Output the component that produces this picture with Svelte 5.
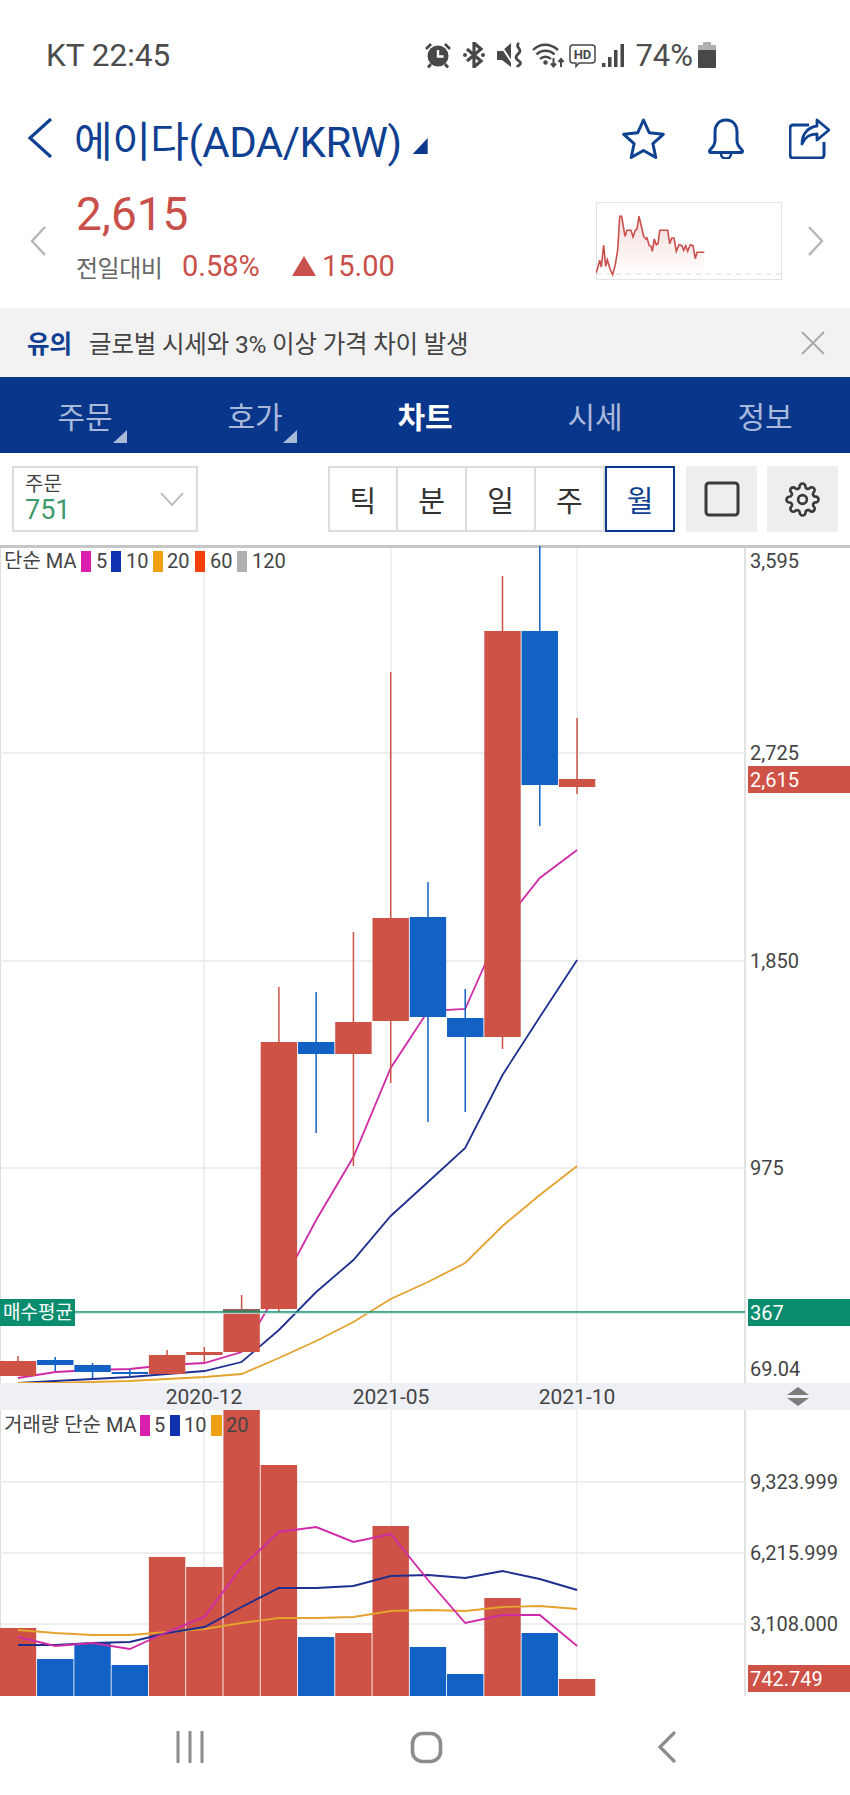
<script>
    const RED = '#cf5247';
    const BLUE = '#1261c4';
    const PINK = '#d02ba6';
    const NAVY = '#1e2f8f';
    const ORANGE = '#e3a32e';

    const cx = (i) => 18 + i * 37.27;

    // body top, body bottom, wick top, wick bottom, colour
    const candles = [
        [1361, 1376, 1356, 1376, RED],
        [1360, 1365, 1357, 1371, BLUE],
        [1365, 1372, 1363, 1378, BLUE],
        [1372, 1374, 1369, 1376, BLUE],
        [1355, 1374, 1350, 1374, RED],
        [1352, 1355, 1347, 1362, RED],
        [1309, 1352, 1295, 1352, RED],
        [1042, 1309, 987, 1312, RED],
        [1042, 1054, 992, 1133, BLUE],
        [1022, 1054, 932, 1166, RED],
        [918, 1021, 672, 1083, RED],
        [917, 1017, 882, 1122, BLUE],
        [1018, 1037, 989, 1112, BLUE],
        [631, 1037, 576, 1049, RED],
        [631, 785, 546, 826, BLUE],
        [779, 787, 718, 794, RED]
    ];

    const priceLines = [
        { color: PINK, ys: [1378, 1372, 1370, 1369, 1365, 1363, 1352, 1290, 1220, 1157, 1068, 1011, 1009, 925, 878, 850] },
        { color: NAVY, ys: [1383, 1381, 1379, 1377, 1374, 1371, 1362, 1330, 1292, 1260, 1216, 1182, 1148, 1075, 1017, 960] },
        { color: ORANGE, ys: [1383, 1383, 1382, 1381, 1379, 1377, 1374, 1358, 1341, 1322, 1299, 1282, 1263, 1226, 1195, 1166] }
    ];

    const volumes = [
        [1628, RED], [1659, BLUE], [1643, BLUE], [1665, BLUE],
        [1557, RED], [1567, RED], [1410, RED], [1465, RED],
        [1637, BLUE], [1633, RED], [1526, RED], [1647, BLUE],
        [1674, BLUE], [1598, RED], [1633, BLUE], [1679, RED]
    ];

    const volumeLines = [
        { color: ORANGE, ys: [1630, 1633, 1635, 1635, 1632, 1629, 1623, 1618, 1618, 1617, 1611, 1610, 1611, 1607, 1606, 1609] },
        { color: NAVY, ys: [1645, 1645, 1643, 1642, 1633, 1627, 1607, 1588, 1588, 1586, 1576, 1575, 1578, 1571, 1579, 1590] },
        { color: PINK, ys: [1637, 1646, 1643, 1649, 1632, 1617, 1567, 1532, 1527, 1542, 1534, 1580, 1623, 1615, 1615, 1646] }
    ];

    const toPoints = (ys) => ys.map((y, i) => `${cx(i).toFixed(1)},${y}`).join(' ');

    const grid = [204, 391, 577];
    const priceAxis = [
        ['3,595', 561], ['2,725', 753], ['1,850', 961], ['975', 1168], ['69.04', 1369]
    ];
    const volumeAxis = [
        ['9,323.999', 1482], ['6,215.999', 1553], ['3,108.000', 1624]
    ];
    const dates = [['2020-12', 204], ['2021-05', 391], ['2021-10', 577]];

    const tabs = [
        { label: '주문', mark: true },
        { label: '호가', mark: true },
        { label: '차트', active: true },
        { label: '시세' },
        { label: '정보' }
    ];
    const periods = ['틱', '분', '일', '주', '월'];

    const miniRaw = [
        [47,250],[52,235],[58,212],[63,232],[70,167],[76,230],[81,210],[90,240],[97,255],[105,225],
        [112,180],[118,80],[124,80],[134,140],[140,122],[152,122],[158,142],[165,122],[170,118],[176,80],
        [190,140],[197,148],[200,145],[207,168],[212,170],[216,185],[222,148],[228,165],[233,162],[238,122],
        [262,122],[268,162],[274,145],[281,145],[288,185],[296,165],[305,168],[310,182],[316,168],[322,185],
        [330,165],[338,168],[345,207],[350,188],[372,188]
    ];
    const mini = miniRaw.map(([x, y]) => `${((x - 47) / 3).toFixed(1)},${((y - 37) / 3).toFixed(1)}`).join(' ');
    const miniArea = `0,72 ${mini} 108,72`;
</script>

<main class="phone">
    <div class="status">
        <span class="carrier">KT 22:45</span>
        <div class="status-icons">
            <svg class="ic-alarm" width="26" height="26" viewBox="0 0 26 26">
                <circle cx="13" cy="14" r="10.500" fill="#484848" />
                <path d="M13 8v6.500h5.500" fill="none" stroke="#fff" stroke-width="2.400" />
                <path d="M1 7l5-5M25 7l-5-5M6 22l-3 3.500M20 22l3 3.500" stroke="#484848" stroke-width="2.800" fill="none" />
            </svg>
            <svg class="ic-bt" width="22" height="26" viewBox="0 0 22 26">
                <path d="M4 7l14 12-7 6V1l7 6L4 19" fill="none" stroke="#484848" stroke-width="3.200" />
                <circle cx="2" cy="13" r="2" fill="#484848" />
                <circle cx="20" cy="13" r="2" fill="#484848" />
            </svg>
            <svg class="ic-mute" width="25" height="26" viewBox="0 0 25 26">
                <path d="M0 9h5l9-8v24l-9-7H0z" fill="#484848" />
                <path d="M2 1l14 21" stroke="#fff" stroke-width="2" />
                <path d="M22 1c-5 4 4 6 0 10s-4 5 0 8-1 4-2 6" fill="none" stroke="#484848" stroke-width="2.800" />
            </svg>
            <svg class="ic-wifi" width="33" height="26" viewBox="0 0 33 26">
                <path d="M1 8c7-7 17-7 25 0M4.500 12.500c5-5 13-5 18 0M8 17c3-3 8-3 11 0" fill="none" stroke="#484848" stroke-width="2.400" />
                <circle cx="13.500" cy="20.500" r="2.200" fill="#484848" />
                <path d="M21.500 16v8M19 21.500l2.500 3 2.500-3M29 25v-8M26.500 20l2.500-3 2.500 3" fill="none" stroke="#484848" stroke-width="2" />
            </svg>
            <svg class="ic-hd" width="27" height="26" viewBox="0 0 27 26">
                <path d="M4 3h19a3 3 0 0 1 3 3v12a3 3 0 0 1-3 3H10l-3 3.500V21H4a3 3 0 0 1-3-3V6a3 3 0 0 1 3-3z" fill="none" stroke="#484848" stroke-width="1.500" />
                <text x="13.500" y="17" text-anchor="middle" class="hd-text">HD</text>
            </svg>
            <svg class="ic-signal" width="22" height="26" viewBox="0 0 22 26">
                <rect x="0" y="21" width="3.500" height="4" fill="#484848" />
                <rect x="6" y="15" width="3.500" height="10" fill="#484848" />
                <rect x="12" y="8" width="3.500" height="17" fill="#484848" />
                <rect x="18.500" y="2" width="3.500" height="23" fill="#484848" />
            </svg>
            <span class="batt-text">74%</span>
            <svg class="ic-batt" width="18" height="26" viewBox="0 0 18 26">
                <path d="M5 0h8v3h5v6H0V3h5z" fill="#b0b0b0" />
                <rect x="0" y="8" width="18" height="18" rx="1" fill="#484848" />
            </svg>
        </div>
    </div>

    <header class="title-row">
        <svg class="back" width="26" height="40" viewBox="0 0 26 40">
            <path d="M24 1 3 20l21 19" fill="none" stroke="#0f4191" stroke-width="3.200" />
        </svg>
        <h1>에이다(ADA/KRW)</h1>
        <span class="title-mark"></span>
        <div class="actions">
            <svg width="43" height="41" viewBox="0 0 43 41">
                <path d="M21.500 2l5.800 12.800 14 1.500-10.400 9.400 2.900 13.800-12.300-7-12.300 7 2.900-13.800L1.700 16.300l14-1.500z" fill="none" stroke="#0f4191" stroke-width="3" stroke-linejoin="round" />
            </svg>
            <svg width="38" height="41" viewBox="0 0 38 41">
                <path d="M19 2c-7 0-11 5-11 12v9c0 4-2 6-5 9-1 1-.5 2.500 1 2.500h30c1.500 0 2-1.500 1-2.500-3-3-5-5-5-9v-9c0-7-4-12-11-12z" fill="none" stroke="#0f4191" stroke-width="3" />
                <path d="M14 36c0 6 10 6 10 0" fill="none" stroke="#0f4191" stroke-width="2.600" />
            </svg>
            <svg width="41" height="41" viewBox="0 0 41 41">
                <path d="M20 7H4a3 3 0 0 0-3 3v27a3 3 0 0 0 3 3h28a3 3 0 0 0 3-3V24" fill="none" stroke="#0f4191" stroke-width="3" />
                <path d="M28 2l12 10-12 10v-6c-8 0-12 3-15 10 0-10 6-17 15-18z" fill="none" stroke="#0f4191" stroke-width="2.800" stroke-linejoin="round" />
            </svg>
        </div>
    </header>

    <section class="price-row">
        <svg class="side-arrow" width="16" height="30" viewBox="0 0 16 30">
            <path d="M15 1 2 15l13 14" fill="none" stroke="#b5b5b5" stroke-width="2.400" />
        </svg>
        <div class="price-col">
            <div class="price">2,615</div>
            <div class="change">
                <span class="change-label">전일대비</span>
                <span class="change-pct">0.58%</span>
                <span class="change-arrow"></span>
                <span class="change-val">15.00</span>
            </div>
        </div>
        <div class="mini-chart">
            <svg width="186" height="78" viewBox="0 0 186 78">
                <defs>
                    <linearGradient id="miniFill" x1="0" y1="0" x2="0" y2="1">
                        <stop offset="0" stop-color="#cf5247" stop-opacity="0.2" />
                        <stop offset="1" stop-color="#cf5247" stop-opacity="0.01" />
                    </linearGradient>
                </defs>
                <polygon points={miniArea} fill="url(#miniFill)" />
                <line x1="0" x2="186" y1="72" y2="72" stroke="#d8d8d8" stroke-width="1" stroke-dasharray="5 5" />
                <polyline points={mini} fill="none" stroke="#c9504c" stroke-width="1.600" />
            </svg>
        </div>
        <svg class="side-arrow right" width="16" height="30" viewBox="0 0 16 30">
            <path d="M1 1l13 14L1 29" fill="none" stroke="#b5b5b5" stroke-width="2.400" />
        </svg>
    </section>

    <section class="notice">
        <strong>유의</strong>
        <span>글로벌 시세와 3% 이상 가격 차이 발생</span>
        <svg class="close" width="24" height="24" viewBox="0 0 24 24">
            <path d="M1 1l22 22M23 1 1 23" stroke="#a8a8a8" stroke-width="1.800" fill="none" />
        </svg>
    </section>

    <nav class="tabs">
        {#each tabs as tab}
            <div class="tab" class:active={tab.active}>
                {tab.label}
                {#if tab.mark}<span class="tab-mark"></span>{/if}
            </div>
        {/each}
    </nav>

    <section class="toolbar">
        <div class="select">
            <div class="select-text">
                <span class="select-label">주문</span>
                <span class="select-value">751</span>
            </div>
            <svg width="24" height="14" viewBox="0 0 24 14">
                <path d="M1 1l11 12L23 1" fill="none" stroke="#b0b0b0" stroke-width="1.600" />
            </svg>
        </div>
        <div class="periods">
            {#each periods as p, i}
                <div class="period" class:on={i === 4}>{p}</div>
            {/each}
        </div>
        <button class="tool" aria-label="layout">
            <svg width="36" height="36" viewBox="0 0 36 36">
                <rect x="2" y="2" width="32" height="32" rx="3" fill="none" stroke="#3a3a3a" stroke-width="3" />
            </svg>
        </button>
        <button class="tool" aria-label="settings">
            <svg width="35" height="35" viewBox="0 0 24 24" fill="none" stroke="#3a3a3a" stroke-width="1.800">
                <circle cx="12" cy="12" r="3" />
                <path d="M19.4 15a1.65 1.65 0 0 0 .33 1.82l.06.06a2 2 0 0 1 0 2.83 2 2 0 0 1-2.83 0l-.06-.06a1.65 1.65 0 0 0-1.82-.33 1.65 1.65 0 0 0-1 1.51V21a2 2 0 0 1-2 2 2 2 0 0 1-2-2v-.09A1.65 1.65 0 0 0 9 19.4a1.65 1.65 0 0 0-1.82.33l-.06.06a2 2 0 0 1-2.83 0 2 2 0 0 1 0-2.83l.06-.06a1.65 1.65 0 0 0 .33-1.82 1.65 1.65 0 0 0-1.51-1H3a2 2 0 0 1-2-2 2 2 0 0 1 2-2h.09A1.65 1.65 0 0 0 4.6 9a1.65 1.65 0 0 0-.33-1.82l-.06-.06a2 2 0 0 1 0-2.83 2 2 0 0 1 2.83 0l.06.06a1.65 1.65 0 0 0 1.82.33H9a1.65 1.65 0 0 0 1-1.51V3a2 2 0 0 1 2-2 2 2 0 0 1 2 2v.09a1.65 1.65 0 0 0 1 1.51 1.65 1.65 0 0 0 1.82-.33l.06-.06a2 2 0 0 1 2.83 0 2 2 0 0 1 0 2.83l-.06.06a1.65 1.65 0 0 0-.33 1.82V9a1.65 1.65 0 0 0 1.51 1H21a2 2 0 0 1 2 2 2 2 0 0 1-2 2h-.09a1.65 1.65 0 0 0-1.51 1z" />
            </svg>
        </button>
    </section>

    <!-- the chart itself is a free canvas, y values are page pixels -->
    <svg class="chart" width="850" height="838" viewBox="0 545 850 838">
        <rect x="0" y="545" width="850" height="3" fill="#c6c6c6" />
        <line x1="0.5" x2="0.5" y1="548" y2="1383" stroke="#dcdcdc" />
        <line x1="745" x2="745" y1="548" y2="1383" stroke="#d8d8d8" stroke-width="1.500" />
        {#each grid as x}
            <line x1={x} x2={x} y1="548" y2="1383" stroke="#e2e2e2" />
        {/each}
        {#each priceAxis.slice(1, 4) as [, y]}
            <line x1="0" x2="745" y1={y} y2={y} stroke="#e8e8e8" stroke-width="1.500" />
        {/each}

        {#each priceLines as l}
            <polyline points={toPoints(l.ys)} fill="none" stroke={l.color} stroke-width="1.800" />
        {/each}

        {#each candles as c, i}
            <line x1={cx(i)} x2={cx(i)} y1={c[2]} y2={c[3]} stroke={c[4]} stroke-width="1.500" />
            <rect x={cx(i) - 18.200} y={c[0]} width="36.400" height={c[1] - c[0]} fill={c[4]} />
        {/each}

        <rect x="223" y="1309" width="37" height="3" fill="#7d6a58" />
        <line x1="0" x2="745" y1="1312" y2="1312" stroke="#0b8d6f" stroke-width="1.500" />
        <line x1="0" x2="745" y1="1313.300" y2="1313.300" stroke="#bfe5da" stroke-width="1" />

        <rect x="0" y="1299" width="75" height="27" fill="#0a8d6e" />
        <text x="3" y="1312.500" class="axis cjk white" textLength="70">매수평균</text>

        <rect x="748" y="766" width="102" height="27" fill={RED} />
        <rect x="748" y="1299" width="102" height="27" fill="#0a8d6e" />
        {#each priceAxis as [label, y]}
            <text x="750" y={y} class="axis">{label}</text>
        {/each}
        <text x="750" y="780" class="axis white">2,615</text>
        <text x="750" y="1312.500" class="axis white">367</text>

        <text x="4" y="561" class="axis cjk legend">단순 MA</text>
        <rect x="81" y="551" width="10" height="21" fill="#d91fae" />
        <text x="96" y="561" class="axis legend">5</text>
        <rect x="111" y="551" width="10" height="21" fill="#1030b0" />
        <text x="126" y="561" class="axis legend">10</text>
        <rect x="153" y="551" width="10" height="21" fill="#ee9f12" />
        <text x="167" y="561" class="axis legend">20</text>
        <rect x="195" y="551" width="10" height="21" fill="#f4410c" />
        <text x="210" y="561" class="axis legend">60</text>
        <rect x="237" y="551" width="10" height="21" fill="#b0b0b0" />
        <text x="252" y="561" class="axis legend">120</text>
    </svg>

    <div class="datebar">
        <svg width="850" height="27" viewBox="0 1383 850 27">
            {#each dates as [label, x]}
                <text x={x} y="1397" text-anchor="middle" class="axis date">{label}</text>
            {/each}
            <path d="M787 1395l11-8 11 8zM787 1398l11 8 11-8z" fill="#7c7c7c" />
        </svg>
    </div>

    <svg class="chart" width="850" height="287" viewBox="0 1410 850 287">
        <line x1="0.5" x2="0.5" y1="1410" y2="1696" stroke="#dcdcdc" />
        <line x1="745" x2="745" y1="1410" y2="1696" stroke="#d8d8d8" stroke-width="1.500" />
        {#each grid as x}
            <line x1={x} x2={x} y1="1410" y2="1696" stroke="#e2e2e2" />
        {/each}
        {#each volumeAxis as [, y]}
            <line x1="0" x2="745" y1={y} y2={y} stroke="#e8e8e8" stroke-width="1.500" />
        {/each}

        {#each volumes as v, i}
            <rect x={cx(i) - 18.200} y={v[0]} width="36.400" height={1696 - v[0]} fill={v[1]} />
        {/each}
        {#each volumeLines as l}
            <polyline points={toPoints(l.ys)} fill="none" stroke={l.color} stroke-width="1.900" />
        {/each}

        {#each volumeAxis as [label, y]}
            <text x="750" y={y} class="axis">{label}</text>
        {/each}
        <rect x="748" y="1665" width="102" height="27" fill={RED} />
        <text x="750" y="1679" class="axis white">742.749</text>

        <text x="4" y="1425" class="axis cjk legend">거래량 단순 MA</text>
        <rect x="140" y="1415" width="10" height="21" fill="#d91fae" />
        <text x="154" y="1425" class="axis legend">5</text>
        <rect x="170" y="1415" width="10" height="21" fill="#1030b0" />
        <text x="184" y="1425" class="axis legend">10</text>
        <rect x="211" y="1415" width="11" height="21" fill="#ee9f12" />
        <text x="226" y="1425" class="axis legend">20</text>
    </svg>

    <footer class="softkeys">
        <svg width="28" height="32" viewBox="0 0 28 32">
            <path d="M2 1v30M14 1v30M26 1v30" stroke="#8c8c8c" stroke-width="3" stroke-linecap="round" />
        </svg>
        <svg width="33" height="33" viewBox="0 0 33 33">
            <rect x="2.500" y="2.500" width="28" height="28" rx="10" fill="none" stroke="#8c8c8c" stroke-width="3.600" />
        </svg>
        <svg width="20" height="32" viewBox="0 0 20 32">
            <path d="M17 2 3 16l14 14" fill="none" stroke="#8c8c8c" stroke-width="3.200" stroke-linecap="round" />
        </svg>
    </footer>
</main>

<style>
    :global(body) {
        margin: 0;
        background: #fff;
    }

    .phone {
        width: 850px;
        height: 1795px;
        overflow: hidden;
        background: #fff;
        font-family: Roboto, "Noto Sans CJK KR", sans-serif;
        color: #333;
    }

    .status {
        height: 110px;
        padding-left: 46px;
        display: flex;
        align-items: center;
        color: #4c4c4c;
    }
    .carrier {
        font-size: 31.5px;
    }
    .status-icons {
        margin-left: auto;
        margin-right: 134px;
        display: flex;
        align-items: center;
    }
    .ic-bt { margin-left: 12px; }
    .ic-mute { margin-left: 12px; }
    .ic-wifi { margin-left: 10px; }
    .ic-hd { margin-left: 4px; }
    .ic-signal { margin-left: 6px; }
    .batt-text {
        margin-left: 11px;
        font-size: 31px;
    }
    .ic-batt { margin-left: 5px; }
    .hd-text {
        font: 700 13px Roboto, sans-serif;
        fill: #484848;
    }

    .title-row {
        height: 56px;
        display: flex;
        align-items: center;
        padding-left: 27px;
    }
    .title-row h1 {
        margin: 0 0 0 21px;
        font-size: 42px;
        font-weight: 400;
        color: #0f3f90;
        letter-spacing: -0.5px;
        white-space: nowrap;
    }
    .title-mark {
        width: 15px;
        height: 16px;
        margin: 16px 0 0 11px;
        background: #0b3a8c;
        clip-path: polygon(100% 0, 100% 100%, 0 100%);
    }
    .actions {
        margin-left: auto;
        margin-right: 20px;
        display: flex;
        align-items: center;
        gap: 42px;
    }
    .actions svg:last-child {
        margin-left: 2px;
    }

    .price-row {
        height: 134px;
        padding: 8px 26px 0 30px;
        display: flex;
        align-items: center;
    }
    .price-col {
        align-self: flex-start;
        margin: 14px 0 0 30px;
    }
    .price {
        font-size: 46px;
        line-height: 52px;
        color: #c9504a;
    }
    .change {
        margin-top: 10px;
        display: flex;
        align-items: center;
        height: 32px;
    }
    .change-label {
        font-size: 24px;
        color: #666;
        letter-spacing: -0.5px;
        width: 106px;
    }
    .change-pct {
        font-size: 29px;
        color: #c9504a;
        width: 110px;
    }
    .change-arrow {
        width: 24px;
        height: 20px;
        background: #c9504a;
        clip-path: polygon(50% 0, 100% 100%, 0 100%);
        margin-right: 6px;
    }
    .change-val {
        font-size: 29px;
        color: #c9504a;
    }
    .mini-chart {
        margin-left: auto;
        margin-right: 26px;
        width: 186px;
        height: 78px;
        border: 1px solid #e4e4e4;
        box-sizing: border-box;
    }
    .mini-chart svg {
        display: block;
        margin: -1px;
    }

    .notice {
        height: 69px;
        background: #f2f2f2;
        padding: 0 25px 0 27px;
        display: flex;
        align-items: center;
        font-size: 24.500px;
        color: #444;
    }
    .notice strong {
        color: #0f3f90;
        font-weight: 700;
        margin-right: 17px;
    }
    .notice span {
        letter-spacing: -0.2px;
    }
    .close {
        margin-left: auto;
    }

    .tabs {
        height: 76px;
        background: #07368a;
        display: grid;
        grid-template-columns: repeat(5, 1fr);
    }
    .tab {
        position: relative;
        display: flex;
        align-items: center;
        justify-content: center;
        font-size: 30px;
        color: #a9b9da;
    }
    .tab.active {
        color: #fff;
        font-weight: 700;
    }
    .tab-mark {
        position: absolute;
        left: 113px;
        top: 53px;
        width: 14px;
        height: 13px;
        background: #a9b9da;
        clip-path: polygon(100% 0, 100% 100%, 0 100%);
    }

    .toolbar {
        height: 92px;
        box-sizing: border-box;
        padding: 13px 12px 0;
        display: flex;
        align-items: flex-start;
    }
    .select {
        width: 186px;
        height: 66px;
        box-sizing: border-box;
        border: 2px solid #dcdcdc;
        padding: 0 12px 0 11px;
        display: flex;
        align-items: center;
        justify-content: space-between;
    }
    .select-text {
        display: flex;
        flex-direction: column;
    }
    .select-label {
        font-size: 20px;
        line-height: 23px;
        color: #444;
    }
    .select-value {
        font-size: 27px;
        line-height: 29px;
        color: #3f9a6e;
    }
    .periods {
        margin-left: 130px;
        display: flex;
        height: 66px;
        box-sizing: border-box;
        border: 2px solid #dcdcdc;
        border-right: 0;
        width: 349px;
    }
    .period {
        flex: 1;
        display: flex;
        align-items: center;
        justify-content: center;
        font-size: 29px;
        color: #333;
        border-right: 2px solid #dcdcdc;
    }
    .period.on {
        margin: -2px 0;
        color: #0f3f90;
        border: 2px solid #0b3a8c;
    }
    .tool {
        margin-left: 11px;
        width: 71px;
        height: 66px;
        padding: 0;
        border: 0;
        background: #eeeeee;
        display: flex;
        align-items: center;
        justify-content: center;
    }
    .tool + .tool {
        margin-left: 10px;
    }

    .chart {
        display: block;
    }
    .axis {
        font: 400 20px Roboto, "Noto Sans CJK KR", sans-serif;
        fill: #444;
        dominant-baseline: central;
    }
    .axis.cjk {
        font-size: 19px;
    }
    .axis.legend {
        font-size: 20px;
    }
    .axis.date {
        font-size: 21px;
    }
    .axis.white {
        fill: #fff;
    }

    .datebar {
        height: 27px;
        background: #eef0f5;
    }
    .datebar svg {
        display: block;
    }

    .softkeys {
        height: 98px;
        display: grid;
        grid-template-columns: repeat(3, 1fr);
    }
    .softkeys svg {
        margin-top: 34px;
    }
    .softkeys svg:nth-child(1) { justify-self: start; margin-left: 176px; }
    .softkeys svg:nth-child(2) { justify-self: center; margin-left: 3px; }
    .softkeys svg:nth-child(3) { justify-self: end; margin-right: 173px; }
</style>
